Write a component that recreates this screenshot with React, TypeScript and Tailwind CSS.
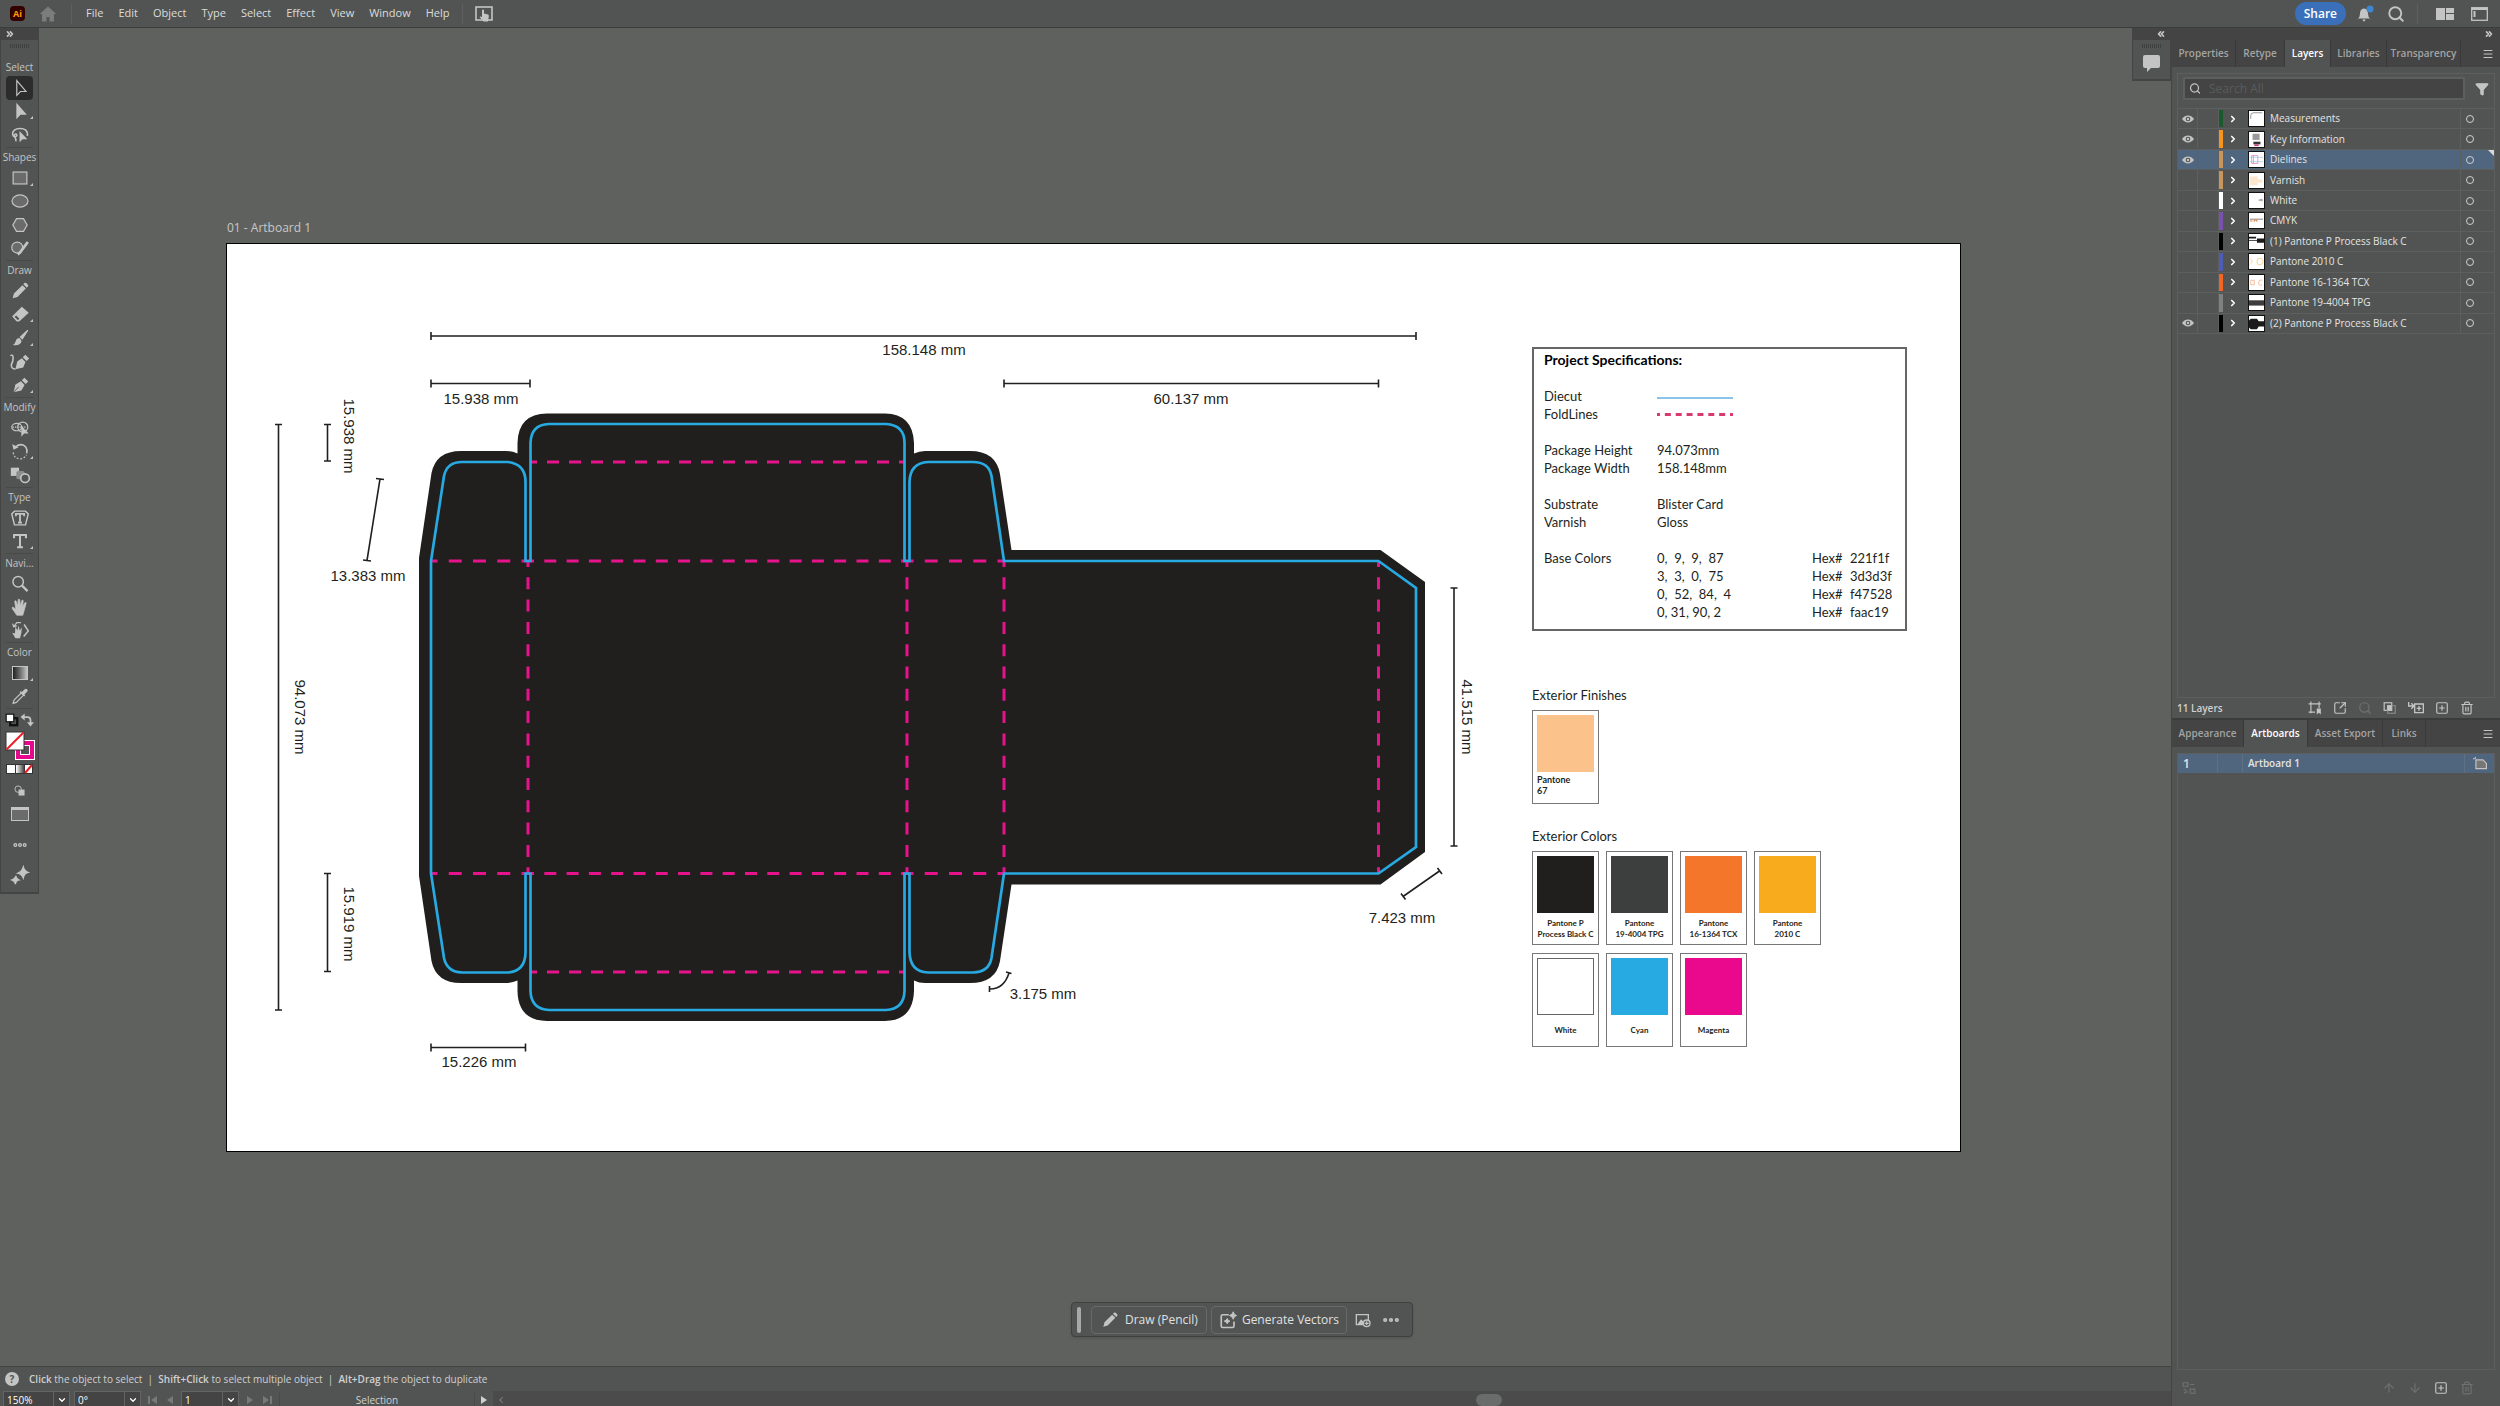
import React from 'react';
import {
  Search,
  Filter,
  Trash2,
  Menu,
  ChevronRight,
  ChevronDown,
  ChevronLeft,
  ChevronsLeft,
  ChevronsRight,
  SquarePlus,
  SquareArrowOutUpRight,
  Ellipsis,
  ArrowUp,
  ArrowDown,
} from 'lucide-react';

/* ---------- Tool icons ---------- */

const Icon: React.FC<{ children: React.ReactNode; className?: string }> = ({ children, className = 'h-6 w-6' }) => (
  <svg
    viewBox="0 0 24 24"
    className={className}
    fill="none"
    stroke="currentColor"
    strokeWidth="1.3"
    aria-hidden="true"
  >
    {children}
  </svg>
);

const PENCIL = 'M4 20l1.4-5.2L14.6 5.6l3.8 3.8-9.2 9.2zM15.6 4.6l1.2-1.2q1-.9 2 0l1.8 1.8q.9 1 0 2l-1.2 1.2z';
const NIB = 'M5 20l2-8.5 6-3.5 4 4-3.500 6zM14 6.800l2.800-2.800 4.200 4.200-2.800 2.800z';
const HAND =
  'M8.500 21l-5-7.500q-.5-1.500 1-1.300l3 2.300L6.200 6q.3-1.500 1.500-.5L9.500 11 10 4q.8-1.500 1.700 0L12.300 11l1.600-6q1-1.200 1.600.2L14.800 11.500l2.600-4.200q1.300-.8 1.300.6L16.500 16 15 21z';

const icons: Record<string, React.ReactNode> = {
  selection: <path d="M8.500 4v16l4-4.200h6z" />,
  direct: <path d="M8 3v18l4.500-5h7z" fill="currentColor" stroke="none" />,
  lasso: (
    <>
      <path d="M20 13C21 7 17 5 12 5S3.500 7.500 4 11.500c.5 3 4.500 3 4.500.8s-3-1.800-2.500.8 2 2.500 1.500 5.900" strokeWidth="1.700" />
      <path d="M11.500 7.500V20l3.300-3.400H20z" fill="currentColor" stroke="none" />
    </>
  ),
  rectangle: <rect x="4.500" y="5.500" width="15" height="13" fill="#6b6b6b" />,
  ellipse: <ellipse cx="12" cy="12" rx="8.700" ry="6.700" fill="#6b6b6b" />,
  polygon: <path d="M8.200 5h7.600l4 7-4 7H8.200l-4-7z" fill="#6b6b6b" />,
  shaper: (
    <>
      <circle cx="9" cy="11.500" r="6" fill="#6b6b6b" />
      <path d="M20.500 5.500L12 17l-2.500 2" strokeWidth="3" />
    </>
  ),
  pencil: <path d={PENCIL} fill="currentColor" stroke="none" />,
  eraser: (
    <>
      <path d="M3.500 14.500L14 4l7.500 6.500-10 9.500H8z" fill="currentColor" stroke="none" />
      <path d="M5 15.200l2.800-2.500 4.500 4.500-2.600 2.300z" fill="#525453" />
    </>
  ),
  brush: (
    <>
      <path d="M20.500 3.500l-8 7.500 2 2z" fill="currentColor" />
      <path d="M11.300 12q-3 0-4 3.500-.7 3-3.300 4 6 1.500 9-2 1.500-2-.2-4z" fill="currentColor" stroke="none" />
    </>
  ),
  curvature: (
    <>
      <path d="M1.500 5q3-1.500 3 2.500T2.500 15q0 5 4.500 4.500" strokeWidth="1.700" />
      <path d="M7 20l2-8.500 5-3.500 4 4-2.500 6zM15 6.800l2.800-2.800 4.200 4.200-2.800 2.800z" fill="currentColor" stroke="none" />
    </>
  ),
  pen: (
    <>
      <path d={NIB} fill="currentColor" stroke="none" />
      <path d="M5 20l5.500-6" stroke="#525453" strokeWidth="1" />
    </>
  ),
  shapeBuilder: (
    <>
      <ellipse cx="8.500" cy="11" rx="5.500" ry="4" />
      <ellipse cx="15" cy="11" rx="5.500" ry="5.500" />
      <path d="M4 11h15" strokeDasharray="1.500 1" />
      <path d="M13.500 9.500v12l3-3.500h5z" fill="currentColor" stroke="none" />
    </>
  ),
  rotate: (
    <>
      <path d="M7 7.500Q14 2.500 18.500 8q2 3 .8 6.500" strokeWidth="1.800" />
      <path d="M3.500 4.500l1.500 6 5.500-2.500z" fill="currentColor" stroke="none" />
      <path d="M4.500 13.500q1 7 8 7 4 0 6.500-4.500" strokeDasharray="2 1.800" />
    </>
  ),
  blend: (
    <>
      <rect x="2" y="4" width="9" height="9" fill="currentColor" stroke="none" />
      <rect x="8" y="7.500" width="9" height="9" rx="2" fill="#8d8d8d" stroke="none" />
      <circle cx="17.500" cy="15.500" r="4.700" fill="#525453" strokeWidth="1.800" />
    </>
  ),
  touchType: (
    <>
      <path d="M6 4.500h12l3 3-3 12H6L3 7.500z" strokeWidth="1.600" />
      <path d="M7.500 10V7.500h9V10M12 7.500V17M9.800 17h4.400" strokeWidth="2" />
    </>
  ),
  type: <path d="M5.500 9V5.500h13V9M12 5.500V19M8.800 18.700h6.400" strokeWidth="2.200" />,
  zoom: (
    <>
      <circle cx="10" cy="9.500" r="5.700" strokeWidth="1.600" />
      <path d="M14.200 13.800l6 6" strokeWidth="2.400" />
    </>
  ),
  hand: <path d={HAND} fill="currentColor" strokeWidth="0.800" />,
  rotateView: (
    <>
      <path d="M7 21l-3.500-6 3 .8L7 8l2 4.500L10.500 7l1.200 5.500L14 9l-.5 6L12 21z" fill="currentColor" stroke="none" />
      <path d="M16.500 6l4.500 7-5 6" strokeWidth="1.700" />
      <path d="M5 8.500L8.500 4H13M4 5l1 3.500 3.500-1" />
    </>
  ),
  eyedropper: (
    <>
      <path d="M4.500 20l1-3.500 8-8 2.500 2.500-8 8z" />
      <path d="M11.500 7.500l5 5 1.200-1.200-.9-.9 3-3q1.200-1.500 0-2.700t-2.700 0l-3 3-1.100-1z" fill="currentColor" stroke="none" />
    </>
  ),
};

const toolGroups = [
  { label: 'Select', tools: ['selection', 'direct', 'lasso'], height: 'h-[71px]' },
  { label: 'Shapes', tools: ['rectangle', 'ellipse', 'polygon', 'shaper'], height: 'h-[94px]' },
  { label: 'Draw', tools: ['pencil', 'eraser', 'brush', 'curvature', 'pen'], height: 'h-[118px]' },
  { label: 'Modify', tools: ['shapeBuilder', 'rotate', 'blend'], height: 'h-[71px]' },
  { label: 'Type', tools: ['touchType', 'type'], height: 'h-[47px]' },
  { label: 'Navi...', tools: ['zoom', 'hand', 'rotateView'], height: 'h-[70px]' },
  { label: 'Color', tools: ['gradient', 'eyedropper'], height: 'h-[47px]' },
];

const withFlyout = ['direct', 'rectangle', 'eraser', 'brush', 'pen', 'rotate', 'type', 'gradient'];

const Grip: React.FC = () => (
  <div className="h-1 w-5 bg-[repeating-linear-gradient(90deg,#3f4040_0_1px,#525453_1px_2px)]" />
);

const Toolbar: React.FC = () => (
  <aside className="z-10 flex w-[39px] shrink-0 flex-col self-start border-r border-b-2 border-l border-[#434443] bg-[#525453] pb-[9px] text-[#c4c4c4]">
    <div className="flex h-3 items-center bg-[#434443] pl-1">
      <ChevronsRight className="h-[10px] w-[10px]" strokeWidth={4} />
    </div>
    <div className="flex h-[18px] items-start justify-center pt-1">
      <Grip />
    </div>
    {toolGroups.map((group) => (
      <section key={group.label} className="mx-[5px] border-b border-[#484a49]">
        <h2 className="flex h-[18px] items-center justify-center text-[10px] font-medium">{group.label}</h2>
        <div className={`grid auto-rows-fr ${group.height}`}>
          {group.tools.map((tool) => (
            <button
              key={tool}
              aria-label={tool}
              className={`relative flex items-center justify-center rounded-sm ${
                tool === 'selection' ? 'bg-[#2c2c2c]' : ''
              }`}
            >
              {tool === 'gradient' ? (
                <span className="h-[14px] w-4 border border-[#c4c4c4] bg-linear-to-r from-[#222] to-[#c4c4c4]" />
              ) : (
                <Icon className="h-[22px] w-[22px]">{icons[tool]}</Icon>
              )}
              {withFlyout.includes(tool) && (
                <span className="absolute right-0 bottom-1 h-0 w-0 border-b-[3px] border-l-[3px] border-b-[#c4c4c4] border-l-transparent" />
              )}
            </button>
          ))}
        </div>
      </section>
    ))}

    {/* Fill and stroke */}
    <div className="flex h-[21px] items-center justify-between px-1">
      <Icon className="h-[14px] w-[14px]">
        <rect x="9" y="9" width="12" height="12" stroke="#111" strokeWidth="4" />
        <rect x="2" y="2" width="13" height="13" fill="#fff" stroke="#111" strokeWidth="2" />
      </Icon>
      <Icon className="h-[14px] w-[14px]">
        <path d="M5 7h8q5 0 5 5v6" strokeWidth="3" />
        <path d="M1 7l7-6v12zM12 16h12l-6 7z" fill="currentColor" stroke="none" />
      </Icon>
    </div>
    <svg viewBox="0 0 36 32" className="h-8 w-9" aria-hidden="true">
      <rect x="17" y="13" width="14" height="14" fill="#525453" stroke="#fff" strokeWidth="6" />
      <rect x="17" y="13" width="14" height="14" fill="none" stroke="#e6088c" strokeWidth="4" />
      <rect x="5" y="2" width="18" height="18" fill="#fff" stroke="#333" />
      <path d="M5.500 19.500l17-17" stroke="#ed1c24" strokeWidth="2" />
    </svg>
    <svg viewBox="0 0 36 14" className="h-[14px] w-9" aria-hidden="true">
      <defs>
        <linearGradient id="mini">
          <stop offset="0" stopColor="#fff" />
          <stop offset="1" stopColor="#444" />
        </linearGradient>
      </defs>
      <rect x="5" y="2" width="27" height="10" fill="#333" />
      <rect x="6" y="3" width="8" height="8" fill="#fff" />
      <rect x="15" y="3" width="8" height="8" fill="url(#mini)" />
      <rect x="24" y="3" width="7" height="8" fill="#fff" />
      <path d="M24 11l7-8" stroke="#ed1c24" strokeWidth="2" />
    </svg>
    <div className="flex h-7 items-center justify-center">
      <Icon className="h-[11px] w-[11px]">
        <circle cx="9" cy="9" r="7" strokeWidth="2" />
        <rect x="10" y="10" width="13" height="13" fill="currentColor" stroke="none" />
      </Icon>
    </div>
    <div className="flex h-5 items-center justify-center">
      <span className="h-[14px] w-[18px] border border-t-[3px] border-[#c4c4c4] bg-[#6b6b6b]" />
    </div>
    <div className="flex h-[42px] items-center justify-center">
      <Ellipsis className="h-4 w-4" strokeWidth={4} />
    </div>
    <div className="flex h-[17px] items-center justify-center">
      <Icon className="h-5 w-5">
        <path
          d="M16 2q1 5 6 7-5 1-6 7-2-5-7-6 5-2 7-8zM7 13q.5 3.500 4 5-3.500.5-4.500 5-1-4-4.500-5 4-1 5-5z"
          fill="currentColor"
        />
      </Icon>
    </div>
  </aside>
);

/* ---------- Menu bar ---------- */

const menus = ['File', 'Edit', 'Object', 'Type', 'Select', 'Effect', 'View', 'Window', 'Help'];

const MenuBar: React.FC = () => (
  <header className="flex h-7 shrink-0 items-center border-b border-[#3b3d3c] bg-[#525453] px-[10px] text-[#dcdcdc]">
    <span className="flex h-[15px] w-[15px] items-center justify-center rounded-sm bg-[#330000] text-[9px] font-bold text-[#ff9a00]">
      Ai
    </span>
    <button aria-label="Home" className="ml-[14px] text-[#7b7d7c]">
      <Icon className="h-[18px] w-[18px]">
        <path d="M12 2l11 10h-3v10h-6v-6h-4v6H4V12H1z" fill="currentColor" stroke="none" />
      </Icon>
    </button>
    <div className="mx-[14px] h-5 w-px bg-[#5e605f]" />
    <nav className="flex gap-[15px] text-[11px] font-medium">
      {menus.map((menu) => (
        <button key={menu}>{menu}</button>
      ))}
    </nav>
    <div className="mx-3 h-5 w-px bg-[#5e605f]" />
    <button aria-label="Touch workspace">
      <svg viewBox="0 0 18 16" className="h-4 w-[18px]" aria-hidden="true">
        <rect x="1" y="1" width="16" height="13" fill="none" stroke="#c4c4c4" strokeWidth="1.600" />
        <path d="M7 4q1-1 2 0v3.500l4 1q1 0 .8 2L13 15.500H8.500L4.500 11q.8-1 2.500 0z" fill="#c4c4c4" />
      </svg>
    </button>
    <div className="ml-auto flex items-center">
      <button className="h-[23px] rounded-full bg-[#3970b9] px-[9px] text-xs font-semibold text-white">Share</button>
      <button aria-label="Notifications" className="ml-[10px]">
        <svg viewBox="0 0 18 18" className="h-[18px] w-[18px]" aria-hidden="true">
          <path d="M2 13.500q2-1.500 2-5Q4 4 8 3.500q4 .5 4 5 0 3.500 2 5zM6.500 14.500h3q-.5 2-1.500 2t-1.500-2z" fill="#c4c4c4" />
          <circle cx="14" cy="4" r="3.500" fill="#3f86d0" />
        </svg>
      </button>
      <button aria-label="Search" className="ml-[13px]">
        <Search className="h-[18px] w-[18px] text-[#c4c4c4]" strokeWidth={2.5} />
      </button>
      <div className="mx-3 h-5 w-px bg-[#5e605f]" />
      <button aria-label="Arrange documents" className="ml-[6px]">
        <svg viewBox="0 0 18 12" className="h-3 w-[18px]" aria-hidden="true">
          <path d="M0 0h9v12H0zM10 0h8v5h-8zM10 6h8v6h-8z" fill="#c4c4c4" />
        </svg>
      </button>
      <button aria-label="Switch workspace" className="mr-[2px] ml-[17px]">
        <svg viewBox="0 0 17 14" className="h-[14px] w-[17px]" aria-hidden="true">
          <rect x=".7" y=".7" width="15.600" height="12.600" fill="none" stroke="#c4c4c4" strokeWidth="1.300" />
          <path d="M1 2h15M3.500 4v6" stroke="#c4c4c4" strokeWidth="2" />
        </svg>
      </button>
    </div>
  </header>
);

/* ---------- Dieline drawing ---------- */

type Fold = { d: string; dash: string; offset: number };

const folds: Fold[] = [
  { d: 'M531 462H905', dash: '12 10', offset: 6 },
  { d: 'M531 972H905', dash: '12 10', offset: 6 },
  { d: 'M431 561H528', dash: '13 11.250', offset: 6.5 },
  { d: 'M431 873.500H528', dash: '13 11.250', offset: 6.5 },
  { d: 'M528 561H907', dash: '12 10.300', offset: 6 },
  { d: 'M528 873.500H907', dash: '12 10.300', offset: 6 },
  { d: 'M907 561H1004', dash: '13 11.250', offset: 6.5 },
  { d: 'M907 873.500H1004', dash: '13 11.250', offset: 6.5 },
  { d: 'M528 561V873', dash: '12 10.300', offset: 6 },
  { d: 'M907 561V873', dash: '12 10.300', offset: 6 },
  { d: 'M1004 561V873', dash: '12 10.300', offset: 6 },
  { d: 'M1378.500 561V873', dash: '12 10.300', offset: 6 },
];

// Dimension lines with their end ticks
const dimensions = [
  'M431 336H1416M431 332v8M1416 332v8',
  'M431 383.500H530M431 379.500v8M530 379.500v8',
  'M1004 383.500H1378.500M1004 379.500v8M1378.500 379.500v8',
  'M431 1047.500H525.500M431 1043.500v8M525.500 1043.500v8',
  'M278.500 424.500V1010M275 424.500h7M275 1010h7',
  'M327.500 424.500V461M324 424.500h7M324 461h7',
  'M327.500 873.500V971.500M324 873.500h7M324 971.500h7',
  'M1454 588V846M1450.500 588h7M1450.500 846h7',
  'M380 479L367 560.500M376 478.500l8 1M363 560l8 1',
  'M1439.500 871L1403 896.500M1437.500 868l4.500 6M1401 893.500l4.500 6',
  'M1009 973Q1004 989 990 989M1006 972l5.500 1.500M989.500 986v6',
];

const labels = [
  { text: '158.148 mm', x: 924, y: 355 },
  { text: '15.938 mm', x: 481, y: 404 },
  { text: '60.137 mm', x: 1191, y: 404 },
  { text: '13.383 mm', x: 368, y: 581 },
  { text: '15.226 mm', x: 479, y: 1067 },
  { text: '7.423 mm', x: 1402, y: 923 },
  { text: '3.175 mm', x: 1043, y: 999 },
];

const verticalLabels = [
  { text: '15.938 mm', x: 344, y: 436 },
  { text: '94.073 mm', x: 295, y: 717 },
  { text: '15.919 mm', x: 344, y: 924 },
  { text: '41.515 mm', x: 1462, y: 717 },
];

const Dieline: React.FC = () => (
  <svg viewBox="227 244 1305 906" className="h-[906px] w-[1305px] shrink-0">
    <path
      fill="#211f1d"
      d="M419 558L431.500 473Q436 451 461 451H505Q512 451 517.500 453.500V443Q518 414 547 413.500H885Q913 414 914 443V453.500Q919 451 925 451H970Q996 451 1000 474L1011.500 550H1380.500L1425 582V852L1380.500 884.500H1011.500L1000 961Q996 983 970 983H925Q919 983 914 980.500V991Q913 1020.500 885 1021H547Q518 1020.500 517.500 991V980.500Q512 983 505 983H461Q436 983 431.500 961L419 876Z"
    />
    <g fill="none" stroke="#e6138c" strokeWidth="3">
      {folds.map((fold) => (
        <path key={fold.d} d={fold.d} strokeDasharray={fold.dash} strokeDashoffset={fold.offset} />
      ))}
    </g>
    <path
      fill="none"
      stroke="#27a9e1"
      strokeWidth="2.700"
      d="M431 561L444 476Q447 462 462 462H508Q525.500 464 525.500 482V561H530.500V443Q531 424.500 549 424H886Q904.500 425 904.500 443V561H909.500V482Q910 463 928 462H973Q989 462 991.500 476L1004 561H1378.500L1416 588V847L1378.500 873.500H1004L991.500 958Q989 972 973 972.500H928Q910 972 909.500 952V873.500H904.500V991Q904 1009 886 1010H549Q531 1009 530.500 991V873.500H525.500V952Q525.500 971 508 972.500H462Q447 972 444 958L431 873.500Z"
    />
    <g fill="none" stroke="#231f20" strokeWidth="1.600">
      {dimensions.map((d) => (
        <path key={d} d={d} />
      ))}
    </g>
    <g className="font-['Liberation_Sans',sans-serif] text-[15px]" fill="#231f20" textAnchor="middle">
      {labels.map((label) => (
        <text key={label.text} x={label.x} y={label.y}>
          {label.text}
        </text>
      ))}
      {verticalLabels.map((label) => (
        <text key={label.text} transform={`translate(${label.x} ${label.y}) rotate(90)`}>
          {label.text}
        </text>
      ))}
    </g>
  </svg>
);

/* ---------- Key information ---------- */

const specs = [
  { name: 'Package Height', value: '94.073mm' },
  { name: 'Package Width', value: '158.148mm' },
  { name: '', value: '' },
  { name: 'Substrate', value: 'Blister Card' },
  { name: 'Varnish', value: 'Gloss' },
  { name: '', value: '' },
  { name: 'Base Colors', value: '0,  9,  9,  87', hex: '221f1f' },
  { name: '', value: '3,  3,  0,  75', hex: '3d3d3f' },
  { name: '', value: '0,  52,  84,  4', hex: 'f47528' },
  { name: '', value: '0, 31, 90, 2', hex: 'faac19' },
];

const swatches = [
  { lines: ['Pantone P', 'Process Black C'], color: 'bg-[#211f1d]' },
  { lines: ['Pantone', '19-4004 TPG'], color: 'bg-[#3d3f3e]' },
  { lines: ['Pantone', '16-1364 TCX'], color: 'bg-[#f4762b]' },
  { lines: ['Pantone', '2010 C'], color: 'bg-[#f9ab1e]' },
  { lines: ['White'], color: 'border border-[#666] bg-white' },
  { lines: ['Cyan'], color: 'bg-[#27a9e1]' },
  { lines: ['Magenta'], color: 'bg-[#ea098c]' },
];

const KeyInformation: React.FC = () => (
  <div className="w-[375px] shrink-0 pt-[103px] font-['Lato',sans-serif] text-[13px] text-[#231f20]">
    <section className="h-[284px] border-2 border-[#666] pt-[2px] pl-[10px] leading-[18px]">
      <h2 className="text-sm leading-[18px] font-bold text-black">Project Specifications:</h2>
      <div className="mt-[18px] flex h-[18px] items-center">
        <span className="w-[113px]">Diecut</span>
        <span className="mt-1 h-[2px] w-19 bg-[#8ac4e6]" />
      </div>
      <div className="mb-[18px] flex h-[18px] items-center">
        <span className="w-[113px]">FoldLines</span>
        <svg viewBox="0 0 76 3" className="h-[3px] w-19" aria-hidden="true">
          <path d="M0 1.500H76" stroke="#d93a6e" strokeWidth="3" strokeDasharray="6 4.860" strokeDashoffset="3" />
        </svg>
      </div>
      <table className="w-full border-collapse text-left">
        <tbody>
          {specs.map((row, i) => (
            <tr key={i} className="h-[18px]">
              <th className="w-[113px] p-0 font-normal">{row.name}</th>
              <td className="p-0 whitespace-pre">{row.value}</td>
              <td className="w-[38px] p-0">{row.hex && 'Hex#'}</td>
              <td className="w-[55px] p-0">{row.hex}</td>
            </tr>
          ))}
        </tbody>
      </table>
    </section>

    <h2 className="mt-[52px] leading-6">Exterior Finishes</h2>
    <div className="mt-[3px] h-[94px] w-[67px] border border-[#777] p-1 text-[9px] leading-[11px] font-bold">
      <div className="h-[57px] w-[57px] bg-[#fbc28b]" />
      <p className="mt-[2px]">
        Pantone
        <br />
        67
      </p>
    </div>

    <h2 className="mt-5 leading-6">Exterior Colors</h2>
    <div className="mt-[3px] grid grid-cols-[repeat(4,67px)] gap-x-[7px] gap-y-2">
      {swatches.map((swatch) => (
        <div key={swatch.lines.join()} className="flex h-[94px] flex-col items-center border border-[#777] pt-1">
          <div className={`h-[57px] w-[57px] ${swatch.color}`} />
          <p className="flex flex-1 flex-col justify-center text-center text-[8px] leading-[11px] font-bold whitespace-nowrap">
            {swatch.lines.map((line) => (
              <span key={line}>{line}</span>
            ))}
          </p>
        </div>
      ))}
    </div>
  </div>
);

const ContextBar: React.FC = () => (
  <div className="absolute bottom-[29px] left-[1032px] flex h-[35px] items-center rounded border border-[#3f4140] bg-[#525453] px-[5px] text-xs text-[#e0e0e0] shadow">
    <span className="h-[26px] w-1 rounded-full bg-[#a8a8a8]" />
    <button className="ml-[10px] flex h-7 items-center gap-[5px] rounded-sm border border-[#686a69] px-2">
      <Icon className="h-5 w-5 text-[#c4c4c4]">
        <path d={PENCIL} fill="currentColor" stroke="none" />
      </Icon>
      Draw (Pencil)
    </button>
    <button className="ml-1 flex h-7 items-center gap-[5px] rounded-sm border border-[#686a69] px-[7px]">
      <Icon className="h-[18px] w-[18px] text-[#c4c4c4]">
        <path d="M13 5H5Q3 5 3 7v13q0 2 2 2h13q2 0 2-2v-6" strokeWidth="2.200" />
        <path d="M19 1q.5 4 4.500 5-4 1-4.500 5-1-4-5-5 4-1 5-5zM11 10q.5 3 3.500 3.500-3 .5-3.500 3.500-1-3-4-3.500 3-.5 4-3.500z" fill="currentColor" />
      </Icon>
      Generate Vectors
    </button>
    <button aria-label="Place image" className="ml-2 text-[#c4c4c4]">
      <Icon className="h-4 w-4">
        <path d="M13 19H2V4h18v8" strokeWidth="2" />
        <path d="M4 18l5-7 4 4-1 3z" fill="currentColor" stroke="none" />
        <circle cx="17.500" cy="17" r="5" strokeWidth="2" />
        <path d="M17.500 14v6M14.500 17h6" strokeWidth="1.800" />
      </Icon>
    </button>
    <button aria-label="More options" className="mr-[6px] ml-[10px] text-[#c4c4c4]">
      <Ellipsis className="h-5 w-5" strokeWidth={3} />
    </button>
  </div>
);

/* ---------- Panels ---------- */

const layers = [
  { name: 'Measurements', bar: 'bg-[#1b5a2c]', visible: true, art: <path d="M2 5q0-3 3-3h10M2 5v4" stroke="#888" fill="none" /> },
  {
    name: 'Key Information',
    bar: 'bg-[#f7941e]',
    visible: true,
    art: (
      <>
        <path d="M4 2h8v7H4z" fill="#999" />
        <path d="M5 11h8v3H5z" fill="#333" />
        <path d="M6 14h5v2H6z" fill="#c6417a" />
      </>
    ),
  },
  {
    name: 'Dielines',
    bar: 'bg-[#c8955f]',
    visible: true,
    art: (
      <>
        <path d="M1 6h15M1 11h15" stroke="#9fd4ef" />
        <path d="M3 4h7v9H3zM5 4v9" stroke="#f08cc0" fill="none" />
      </>
    ),
  },
  { name: 'Varnish', bar: 'bg-[#c8955f]', art: <path d="M1 4h9v3h5v4h-5v3H1z" fill="#fde6d0" /> },
  { name: 'White', bar: 'bg-white', art: <path d="M11 8l4-1v2z" fill="#aaa" stroke="#aaa" /> },
  {
    name: 'CMYK',
    bar: 'bg-[#7a52ad]',
    art: (
      <>
        <path d="M1 7h15" stroke="#777" />
        <path d="M1 9h3M6 10V8h3v2" stroke="#d0703c" fill="none" />
      </>
    ),
  },
  { name: '(1) Pantone P Process Black C', bar: 'bg-black', art: <path d="M0 3h8v2H0zM0 7h9V5h8v5H9V8H0z" fill="#1b1b1b" /> },
  {
    name: 'Pantone 2010 C',
    bar: 'bg-[#4d5cb5]',
    art: <path d="M1 5q5 3 0 7M10 5h4l2 3-2 4h-4l-1-3z" stroke="#fbcf85" fill="none" />,
  },
  {
    name: 'Pantone 16-1364 TCX',
    bar: 'bg-[#f26522]',
    art: <path d="M2 6h4v5H2zM15 6q-4-1-4 3t4 2" stroke="#f7b493" fill="none" />,
  },
  { name: 'Pantone 19-4004 TPG', bar: 'bg-[#808080]', art: <path d="M0 6h17v6H0z" fill="#3d3d3f" /> },
  {
    name: '(2) Pantone P Process Black C',
    bar: 'bg-black',
    visible: true,
    art: <path d="M0 5l2-2h7l2 3h6v6h-6l-2 3H2l-2-2z" fill="#1b1b1b" />,
  },
];

const Eye: React.FC = () => (
  <svg viewBox="0 0 14 8" className="h-2 w-3" aria-hidden="true">
    <path d="M0 4q3-4 7-4t7 4q-3 4-7 4T0 4z" fill="#c4c4c4" />
    <circle cx="7" cy="4" r="2.700" fill="#525453" />
    <circle cx="7" cy="4" r="1.400" fill="#c4c4c4" />
  </svg>
);

const Tabs: React.FC<{ items: { name: string; width: string }[]; active: string }> = ({ items, active }) => (
  <div role="tablist" className="flex h-[27px] shrink-0 bg-[#434443] text-[10px] font-semibold text-[#a3a3a3]">
    {items.map((tab) => (
      <button
        key={tab.name}
        role="tab"
        aria-selected={tab.name === active}
        className={`shrink-0 border-r border-[#383938] ${tab.width} ${
          tab.name === active ? 'bg-[#525453] text-white' : ''
        }`}
      >
        {tab.name}
      </button>
    ))}
    <button aria-label="Panel menu" className="mr-[6px] ml-auto">
      <Menu className="h-3 w-3 text-[#c4c4c4]" />
    </button>
  </div>
);

const LayersPanel: React.FC = () => (
  <>
    <Tabs
      active="Layers"
      items={[
        { name: 'Properties', width: 'w-[64px]' },
        { name: 'Retype', width: 'w-[49px]' },
        { name: 'Layers', width: 'w-[46px]' },
        { name: 'Libraries', width: 'w-[56px]' },
        { name: 'Transparency', width: 'w-[74px]' },
      ]}
    />
    <div className="mx-[5px] mt-[6px] h-[625px] shrink-0 border border-[#5d5f5e]">
      <div className="flex h-[34px] items-start gap-[10px] px-[5px] pt-[3px]">
        <label className="flex h-[23px] flex-1 items-center gap-2 border-2 border-[#5d5f5e] bg-[#434443] px-1">
          <Search className="h-[13px] w-[13px] text-[#c4c4c4]" strokeWidth={2.5} />
          <input
            type="text"
            aria-label="Search layers"
            placeholder="Search All"
            className="w-full bg-transparent text-xs outline-none placeholder:text-[#5a5c5b]"
          />
        </label>
        <button aria-label="Filter" className="flex h-[23px] items-center">
          <Filter className="h-[14px] w-[14px] text-[#c4c4c4]" fill="currentColor" />
        </button>
      </div>
      <ul className="grid h-[226px] auto-rows-fr border-t border-[#5d5f5e]">
        {layers.map((layer) => (
          <li
            key={layer.name}
            className={`relative flex items-stretch border-b border-[#5d5f5e] text-[10px] font-medium text-[#e4e4e4] ${
              layer.name === 'Dielines' ? 'bg-[#50667e]' : ''
            }`}
          >
            <button aria-label="Toggle visibility" className="flex w-5 items-center justify-center border-r border-[#5d5f5e]">
              {layer.visible && <Eye />}
            </button>
            <button aria-label="Toggle lock" className="w-[21px] border-r border-[#5d5f5e]" />
            <span className={`my-px w-1 ${layer.bar}`} />
            <button aria-label="Expand layer" className="flex w-5 items-center justify-center text-white">
              <ChevronRight className="h-[10px] w-[10px]" strokeWidth={4} />
            </button>
            <svg viewBox="0 0 17 17" className="ml-[5px] h-[17px] w-[17px] self-center border border-[#111] bg-white" aria-hidden="true">
              {layer.art}
            </svg>
            <span className="ml-[5px] flex flex-1 items-center">{layer.name}</span>
            <button aria-label="Target layer" className="w-[34px] border-l border-[#5d5f5e] pl-[5px]">
              <span className="block h-2 w-2 rounded-full border border-[#d0d0d0]" />
            </button>
            {layer.name === 'Dielines' && (
              <span className="absolute top-0 right-0 h-0 w-0 border-t-[6px] border-l-[6px] border-t-[#d8d8d8] border-l-transparent" />
            )}
          </li>
        ))}
      </ul>
    </div>
    <div className="flex h-5 shrink-0 items-center pl-[5px] text-[10px] font-semibold text-[#d0d0d0]">
      <span>11 Layers</span>
      <div className="mr-[26px] ml-auto flex items-center gap-[11px] text-[#c4c4c4]">
        <button aria-label="Collect for export">
          <Icon className="h-[14px] w-[14px]">
            <path d="M5 1v20M1 5h21M19 1v11M1 19h11" strokeWidth="2" />
            <path d="M15 13h7v10l-3.500-3-3.500 3z" fill="currentColor" stroke="none" />
          </Icon>
        </button>
        <button aria-label="Export">
          <SquareArrowOutUpRight className="h-[14px] w-[14px]" />
        </button>
        <button aria-label="Locate object" className="text-[#6f7170]">
          <Search className="h-[14px] w-[14px]" />
        </button>
        <button aria-label="Make clipping mask">
          <Icon className="h-[14px] w-[14px]">
            <rect x="2" y="3" width="13" height="13" strokeWidth="2" />
            <rect x="8" y="8" width="13" height="13" stroke="#888" strokeWidth="2" />
            <rect x="7" y="7" width="8" height="9" fill="currentColor" stroke="none" />
          </Icon>
        </button>
        <button aria-label="New sublayer">
          <Icon className="h-4 w-4">
            <path d="M1 3v6h7M5 5l4 4-4 4M10 6h13v13H10zM16.500 9v7M13 12.500h7" strokeWidth="2" />
          </Icon>
        </button>
        <button aria-label="New layer">
          <SquarePlus className="h-[14px] w-[14px]" />
        </button>
        <button aria-label="Delete layer">
          <Trash2 className="h-[14px] w-[14px]" />
        </button>
      </div>
    </div>
  </>
);

const ArtboardsPanel: React.FC = () => (
  <>
    <div className="border-t-2 border-[#3b3d3c]">
      <Tabs
        active="Artboards"
        items={[
          { name: 'Appearance', width: 'w-[72px]' },
          { name: 'Artboards', width: 'w-[64px]' },
          { name: 'Asset Export', width: 'w-[75px]' },
          { name: 'Links', width: 'w-[43px]' },
        ]}
      />
    </div>
    <div className="mx-[5px] mt-[6px] flex-1 border border-[#5d5f5e]">
      <div className="flex h-[19px] items-stretch bg-[#50667e] text-[10px] font-semibold text-[#e4e4e4]">
        <span className="flex w-10 items-center border-r border-[#5d7084] pl-[5px] text-xs">1</span>
        <span className="w-[25px] border-r border-[#5d7084]" />
        <span className="flex flex-1 items-center pl-[5px]">Artboard 1</span>
        <button aria-label="Artboard options" className="flex w-[30px] items-center justify-center border-l border-[#5d7084]">
          <Icon className="h-[14px] w-[14px] text-[#c4c4c4]">
            <path d="M5 5h12l6 6v9H5z" fill="#777" strokeWidth="2" />
            <path d="M0 3h3M4 0v3" strokeWidth="2" />
          </Icon>
        </button>
      </div>
    </div>
    <div className="mx-[10px] flex h-9 shrink-0 items-center text-[#6f7170]">
      <Icon className="h-[14px] w-[14px]">
        <path d="M2 3h8v6H2zM14 14h8v7h-8zM14 6h7M3 13l7 7M3 20h4" strokeWidth="2" />
      </Icon>
      <div className="mr-4 ml-auto flex gap-3">
        <ArrowUp className="h-[14px] w-[14px]" />
        <ArrowDown className="h-[14px] w-[14px]" />
        <button aria-label="New artboard" className="text-[#c4c4c4]">
          <SquarePlus className="h-[14px] w-[14px]" />
        </button>
        <Trash2 className="h-[14px] w-[14px]" />
      </div>
    </div>
  </>
);

/* ---------- Status bar ---------- */

const Combo: React.FC<{ label: string; value: string; width: string }> = ({ label, value, width }) => (
  <label className={`relative h-[18px] shrink-0 border border-[#636564] bg-[#434443] ${width}`}>
    <select aria-label={label} className="h-full w-full appearance-none bg-transparent pl-[3px] text-[10px] text-white outline-none">
      <option>{value}</option>
    </select>
    <span className="pointer-events-none absolute inset-y-0 right-0 flex w-4 items-center justify-center border-l border-[#636564]">
      <ChevronDown className="h-[10px] w-[10px] text-white" strokeWidth={3} />
    </span>
  </label>
);

const Triangle: React.FC<{ flip?: boolean; bar?: boolean }> = ({ flip, bar }) => (
  <svg viewBox="0 0 10 10" className={`h-[10px] w-[10px] ${flip ? 'rotate-180' : ''}`} aria-hidden="true">
    <path d={bar ? 'M0 1l6 4-6 4zM7 1h2v8H7z' : 'M2 1l6 4-6 4z'} fill="currentColor" />
  </svg>
);

const StatusBar: React.FC = () => (
  <footer className="h-10 shrink-0 overflow-hidden border-t border-[#434443] bg-[#525453] text-[10px] text-[#d0d0d0]">
    <div className="flex h-6 items-center pl-[5px]">
      <span className="mr-[10px] flex h-[14px] w-[14px] items-center justify-center rounded-full bg-[#c4c4c4] font-bold text-[#525453]">
        ?
      </span>
      <p>
        <span className="font-semibold">Click</span> the object to select&nbsp; |&nbsp;{' '}
        <span className="font-semibold">Shift+Click</span> to select multiple object&nbsp; |&nbsp;{' '}
        <span className="font-semibold">Alt+Drag</span> the object to duplicate
      </p>
    </div>
    <div className="flex h-[18px] items-center pl-[3px]">
      <Combo label="Zoom" value="150%" width="w-[67px]" />
      <span className="w-1" />
      <Combo label="Rotation" value="0°" width="w-[67px]" />
      <div className="flex w-10 items-center justify-center gap-2 text-[#777978]">
        <Triangle flip bar />
        <Triangle flip />
      </div>
      <Combo label="Artboard" value="1" width="w-[58px]" />
      <div className="flex w-10 items-center justify-center gap-2 text-[#777978]">
        <Triangle />
        <Triangle bar />
      </div>
      <span className="w-[196px] border-x border-[#484a49] text-center font-medium">Selection</span>
      <span className="flex w-[18px] justify-center">
        <Triangle />
      </span>
      <div className="flex h-full flex-1 items-center bg-[#4a4b4a] px-[3px] text-[#a0a0a0]">
        <ChevronLeft className="h-[10px] w-[10px]" />
        <div className="flex flex-1 justify-center">
          <span className="ml-[304px] h-3 w-[26px] rounded-full bg-[#6a6c6b]" />
        </div>
      </div>
    </div>
  </footer>
);

const App: React.FC = () => (
  <div className="flex h-screen flex-col overflow-hidden bg-[#5f615f] font-['Open_Sans',sans-serif]">
    <MenuBar />
    <div className="flex min-h-0 flex-1">
      <div className="flex min-w-0 flex-1 flex-col">
        <main className="relative flex min-h-0 flex-1 overflow-hidden">
          <Toolbar />
          {/* Canvas */}
          <div className="relative min-w-0 flex-1">
            <div className="absolute top-[215px] left-[187px]">
              <h1 className="absolute -top-[25px] left-[1px] text-xs leading-5 font-medium whitespace-nowrap text-[#c8c8c8]">
                01 - Artboard 1
              </h1>
              <div className="flex h-[909px] w-[1735px] border border-black bg-white">
                <Dieline />
                <KeyInformation />
              </div>
            </div>
            <ContextBar />
          </div>
          <aside className="z-10 h-[53px] w-[39px] shrink-0 border-x border-b-2 border-[#434443] bg-[#525453] text-[#c4c4c4]">
            <div className="flex h-3 items-center justify-end bg-[#434443] pr-1">
              <ChevronsLeft className="h-[10px] w-[10px]" strokeWidth={4} />
            </div>
            <div className="flex flex-col items-center pt-1">
              <Grip />
              <button aria-label="Comments" className="mt-[7px]">
                <svg viewBox="0 0 17 17" className="h-[17px] w-[17px]" aria-hidden="true">
                  <path d="M2 0h13q2 0 2 2v9q0 2-2 2H8l-4 4v-4H2q-2 0-2-2V2q0-2 2-2z" fill="currentColor" />
                </svg>
              </button>
            </div>
          </aside>
        </main>
        <StatusBar />
      </div>
      <aside className="flex w-[329px] shrink-0 flex-col border-l border-[#434443] bg-[#525453]">
        <div className="flex h-3 shrink-0 items-center justify-end bg-[#434443] pr-[6px] text-[#c4c4c4]">
          <ChevronsRight className="h-[10px] w-[10px]" strokeWidth={4} />
        </div>
        <LayersPanel />
        <ArtboardsPanel />
      </aside>
    </div>
  </div>
);

export default App;
